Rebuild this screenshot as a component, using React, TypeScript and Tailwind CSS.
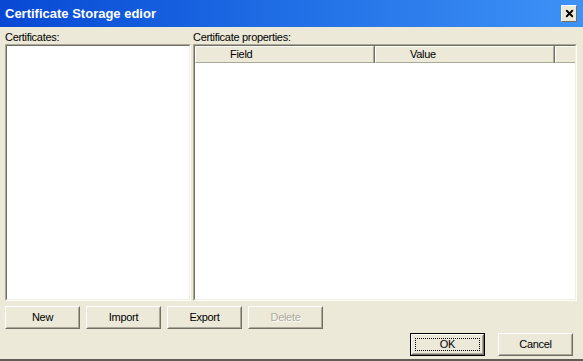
import { X } from 'lucide-react'

const font = { fontFamily: '"Liberation Sans", Arial, sans-serif' }

function Sunken({ className, children }: { className?: string; children?: React.ReactNode }) {
  return (
    <div className={`border border-t-[#aca899] border-l-[#aca899] border-r-white border-b-white ${className ?? ''}`}>
      <div className="h-full border border-t-[#716f64] border-l-[#716f64] border-r-[#f1efe2] border-b-[#f1efe2] bg-white flex flex-col overflow-hidden">
        {children}
      </div>
    </div>
  )
}

function Button({ label, disabled, isDefault }: { label: string; disabled?: boolean; isDefault?: boolean }) {
  const inner = (
    <div className="h-full border border-t-white border-l-white border-r-[#716f64] border-b-[#716f64]">
      <div className="h-full border border-t-[#ece9d8] border-l-[#ece9d8] border-r-[#aca899] border-b-[#aca899] flex items-center justify-center">
        {isDefault ? (
          <span className="border border-dotted border-black w-[calc(100%-4px)] h-[calc(100%-4px)] flex items-center justify-center">
            {label}
          </span>
        ) : (
          <span className={disabled ? 'text-[#aca899] [text-shadow:1px_1px_0_#fff]' : ''}>{label}</span>
        )}
      </div>
    </div>
  )
  return (
    <div className={`w-[75px] h-[23px] shrink-0 bg-[#ece9d8] ${isDefault ? 'border border-black' : ''}`}>
      {inner}
    </div>
  )
}

function HeaderCell({ label, width }: { label?: string; width?: string }) {
  return (
    <div className={`h-full border-r border-r-[#716f64] ${width ?? 'flex-1'}`}>
      <div className="h-full border border-t-white border-l-white border-r-[#aca899] border-b-[#aca899] bg-[#ece9d8] pl-[34px] flex items-center">
        {label}
      </div>
    </div>
  )
}

export default function App() {
  return (
    <div
      className="w-[583px] h-[361px] bg-[#ece9d8] flex flex-col text-[11px] tracking-[-0.3px] text-black border-b-2 border-b-[#5f5d54] overflow-hidden"
      style={font}
    >
      {/* Title bar */}
      <div className="h-[27px] shrink-0 flex items-center justify-between pl-[5px] pr-[6px] bg-linear-to-r from-[#0848d4] to-[#3e92f6]">
        <span className="text-white font-bold text-[13px] tracking-normal">Certificate Storage edior</span>
        <div className="w-[16px] h-[17px] bg-[#ece9d8] border border-t-white border-l-white border-r-[#716f64] border-b-[#716f64] flex items-center justify-center">
          <X size={11} strokeWidth={4} className="text-black" />
        </div>
      </div>

      {/* Body */}
      <div className="flex-1 flex flex-col px-[5px] pt-[4px]">
        <div className="flex gap-[2px]">
          <div className="w-[186px] shrink-0 flex flex-col">
            <div className="h-[13px] leading-[13px]">Certificates:</div>
            <Sunken className="h-[257px]" />
          </div>
          <div className="w-[384px] shrink-0 flex flex-col">
            <div className="h-[13px] leading-[13px]">Certificate properties:</div>
            <Sunken className="h-[257px]">
              <div className="h-[17px] flex shrink-0">
                <HeaderCell label="Field" width="w-[180px] shrink-0" />
                <HeaderCell label="Value" width="w-[180px] shrink-0" />
                <HeaderCell />
              </div>
            </Sunken>
          </div>
        </div>

        <div className="flex gap-[6px] mt-[5px]">
          <Button label="New" />
          <Button label="Import" />
          <Button label="Export" />
          <Button label="Delete" disabled />
        </div>

        <div className="flex justify-end gap-[13px] mt-[4px] pr-[5px]">
          <Button label="OK" isDefault />
          <Button label="Cancel" />
        </div>
      </div>
    </div>
  )
}
